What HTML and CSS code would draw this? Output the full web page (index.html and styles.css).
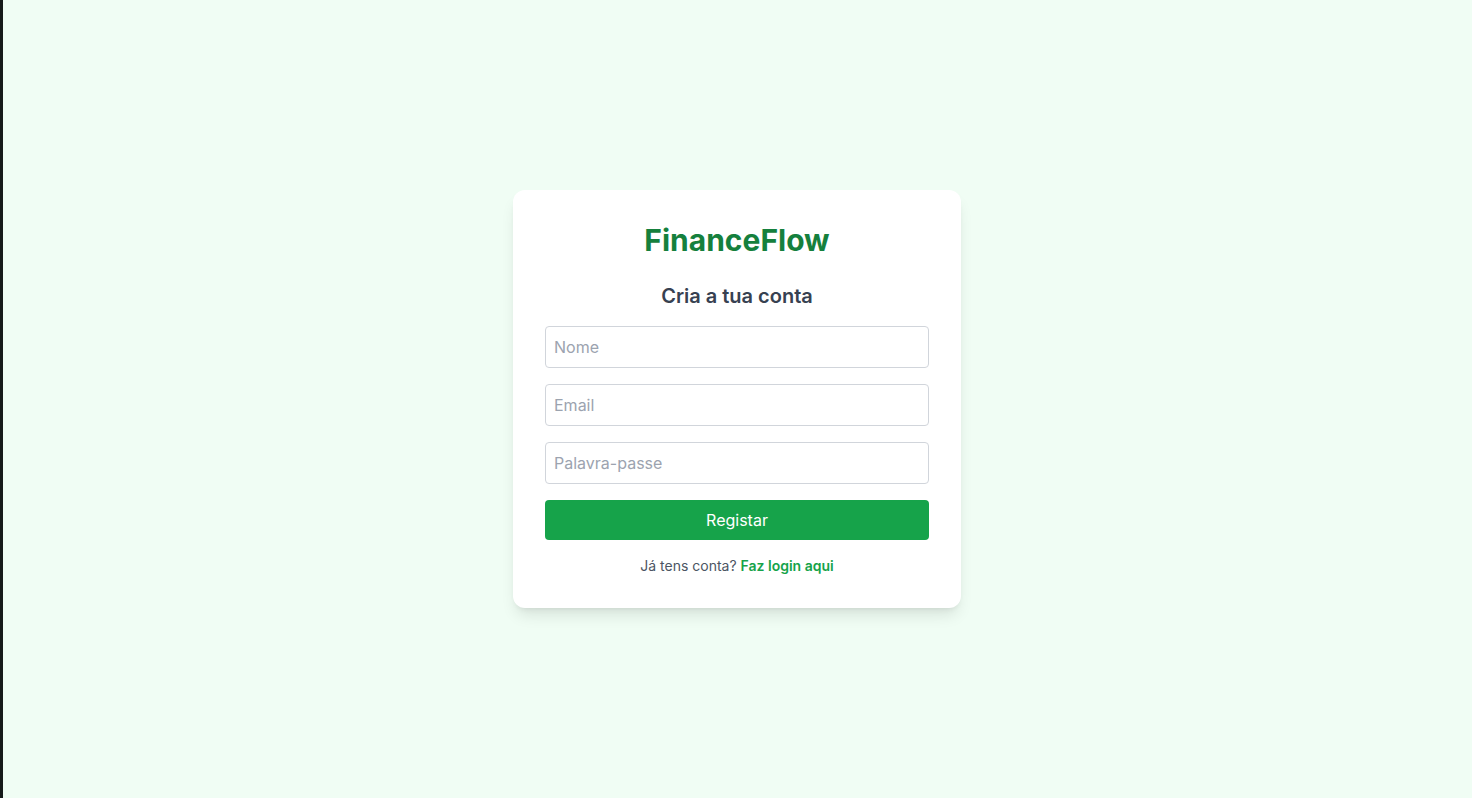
FILE: index.html
```html
<!DOCTYPE html>
<html lang="pt">
<head>
<meta charset="utf-8">
<title>FinanceFlow - Registo</title>
<link rel="stylesheet" href="styles.css">
</head>
<body>
<div class="edge"></div>
<main class="page">
  <div class="card">
    <h1 class="brand">FinanceFlow</h1>
    <h2 class="heading">Cria a tua conta</h2>
    <form class="form">
      <input class="field" type="text" placeholder="Nome">
      <input class="field" type="email" placeholder="Email">
      <input class="field" type="password" placeholder="Palavra-passe">
      <button class="submit" type="button">Registar</button>
    </form>
    <p class="footer">Já tens conta? <a class="link" href="#">Faz login aqui</a></p>
  </div>
</main>
</body>
</html>
```

FILE: styles.css
```css
* { box-sizing: border-box; }
html, body { margin: 0; height: 100%; }
body {
  display: flex;
  font-family: Inter, "Noto Sans", sans-serif;
  background: #f0fdf4;
}
.edge {
  width: 3px;
  flex: none;
  background: #161a1a;
}
.page {
  flex: 1;
  display: flex;
  align-items: center;
  justify-content: center;
  padding-right: 1px;
}
.card {
  width: 448px;
  background: #ffffff;
  border-radius: 12px;
  padding: 32px;
  box-shadow: 0 10px 15px -3px rgba(0,0,0,0.1), 0 4px 6px -4px rgba(0,0,0,0.1);
}
.brand {
  margin: 0 0 24px;
  text-align: center;
  font-size: 30px;
  line-height: 36px;
  font-weight: 700;
  color: #15803d;
}
.heading {
  margin: 0 0 16px;
  text-align: center;
  font-size: 20px;
  line-height: 28px;
  font-weight: 600;
  color: #374151;
}
.form {
  display: flex;
  flex-direction: column;
  gap: 16px;
}
.field {
  width: 100%;
  height: 42px;
  padding: 8px;
  border: 1px solid #d1d5db;
  border-radius: 4px;
  font-family: inherit;
  font-size: 16px;
  line-height: 24px;
  color: #111827;
  outline: none;
}
.field::placeholder { color: #9ca3af; }
.submit {
  width: 100%;
  height: 40px;
  border: none;
  border-radius: 4px;
  background: #16a34a;
  color: #ffffff;
  font-family: inherit;
  font-size: 16px;
  line-height: 24px;
  cursor: pointer;
}
.footer {
  margin: 16px 0 0;
  text-align: center;
  font-size: 14px;
  line-height: 20px;
  color: #4b5563;
}
.link {
  color: #16a34a;
  font-weight: 600;
  text-decoration: none;
}
```
